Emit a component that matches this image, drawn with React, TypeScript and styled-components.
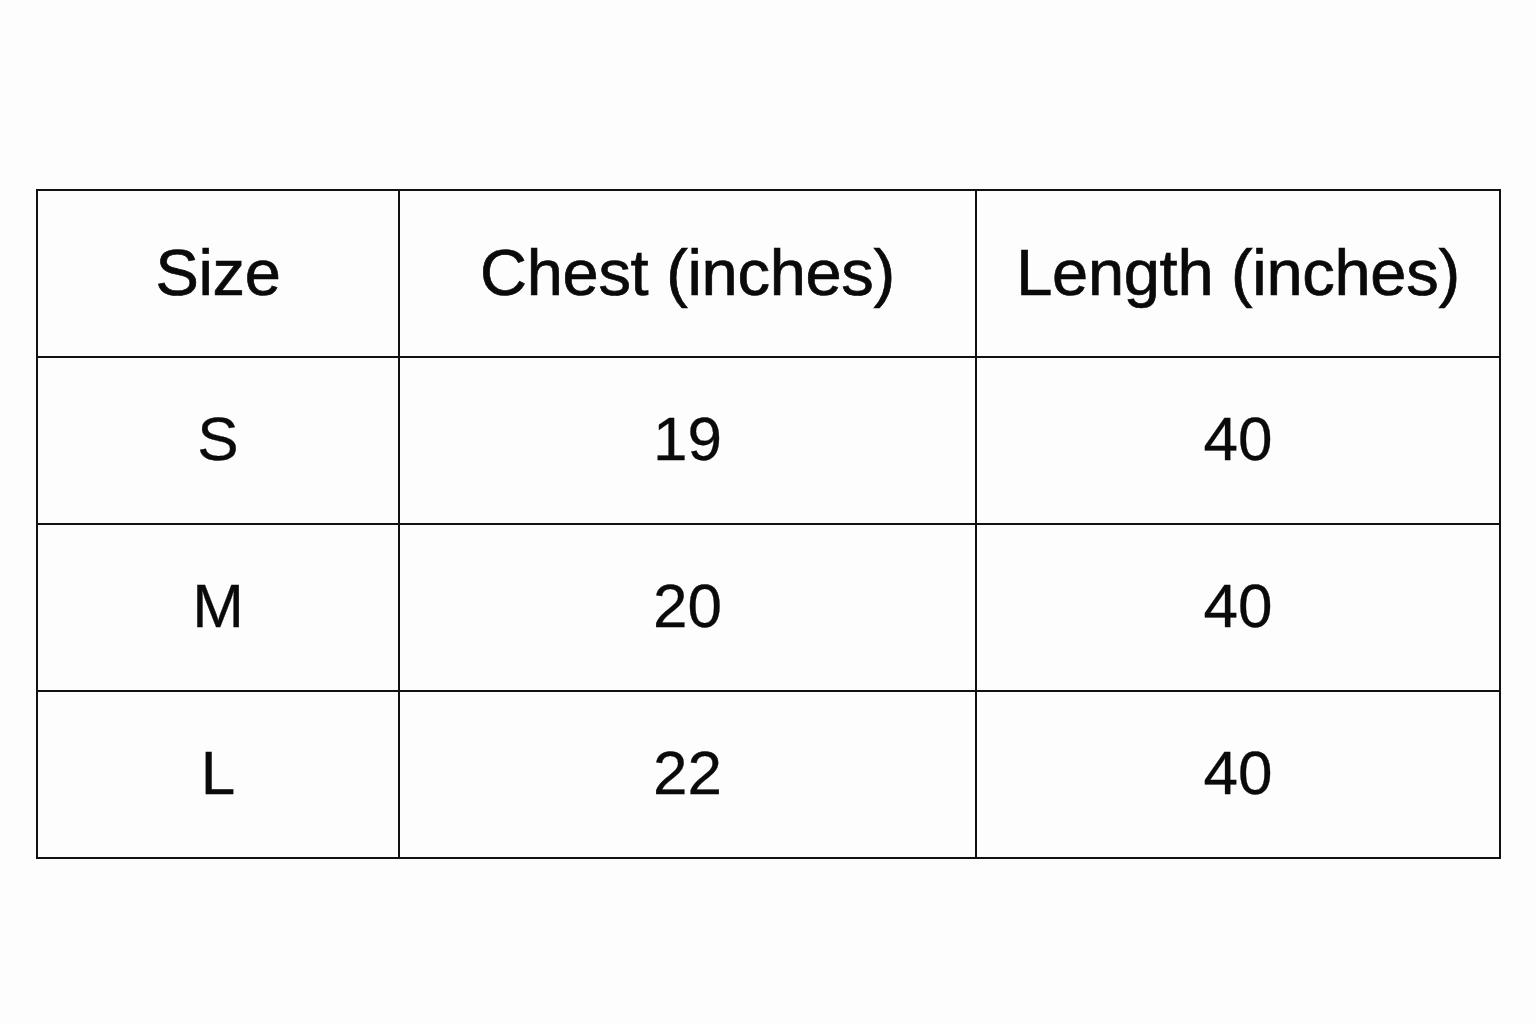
import * as React from 'react';
import styled, { createGlobalStyle } from 'styled-components';

const GlobalStyle = createGlobalStyle`
  html, body {
    margin: 0;
    padding: 0;
    background: #fdfdfd;
  }
  body {
    font-family: "Liberation Sans", Arial, sans-serif;
    color: #0a0a0a;
  }
`;

const Page = styled.div`
  width: 1536px;
  height: 1024px;
  padding: 189px 0 0 36px;
  box-sizing: border-box;
`;

const SizeTable = styled.table`
  width: 1463px;
  border-collapse: collapse;
  table-layout: fixed;
  border: 2px solid #111;
`;

const Col = styled.col<{ $width: number }>`
  width: ${(p) => p.$width}px;
`;

const HeadCell = styled.th`
  height: 162px;
  border: 2px solid #111;
  padding: 0 0 3px;
  text-align: center;
  vertical-align: middle;
  font-size: 65px;
  font-weight: 400;
  letter-spacing: -0.3px;
  -webkit-text-stroke: 0.7px #0a0a0a;
`;

const Cell = styled.td`
  height: 160px;
  border: 2px solid #111;
  padding: 0 0 5px;
  text-align: center;
  vertical-align: middle;
  font-size: 62px;
  -webkit-text-stroke: 0.3px #0a0a0a;
`;

const rows = [
  { size: 'S', chest: 19, length: 40 },
  { size: 'M', chest: 20, length: 40 },
  { size: 'L', chest: 22, length: 40 },
];

const App: React.FC = () => (
  <Page>
    <GlobalStyle />
    <SizeTable>
      <colgroup>
        <Col $width={362} />
        <Col $width={577} />
        <Col $width={524} />
      </colgroup>
      <thead>
        <tr>
          <HeadCell>Size</HeadCell>
          <HeadCell>Chest (inches)</HeadCell>
          <HeadCell>Length (inches)</HeadCell>
        </tr>
      </thead>
      <tbody>
        {rows.map((r) => (
          <tr key={r.size}>
            <Cell>{r.size}</Cell>
            <Cell>{r.chest}</Cell>
            <Cell>{r.length}</Cell>
          </tr>
        ))}
      </tbody>
    </SizeTable>
  </Page>
);

export default App;
